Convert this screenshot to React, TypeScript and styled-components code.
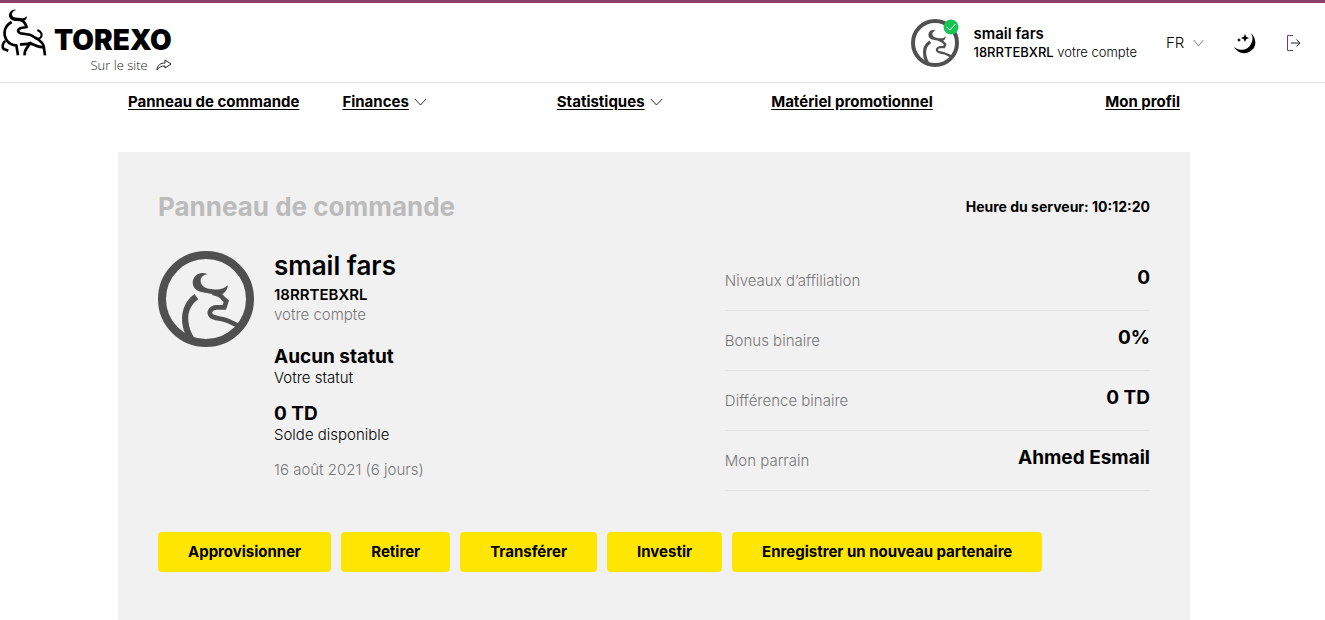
import React from "react";
import styled, { createGlobalStyle } from "styled-components";

const GlobalStyle = createGlobalStyle`
  * { box-sizing: border-box; }
  body {
    margin: 0;
    background: #fff;
    color: #000;
    font-family: Inter, "Liberation Sans", sans-serif;
    font-size: 15px;
    line-height: 20px;
  }
  a { color: inherit; }
  h1, h2, p, dl, dd, dt, ul { margin: 0; padding: 0; }
`;

const Page = styled.div`
  min-height: 100vh;
  display: flex;
  flex-direction: column;
  border-top: 3px solid #8b4065;
`;

const Header = styled.header`
  display: flex;
  justify-content: space-between;
  height: 80px;
  border-bottom: 1px solid #dedede;
`;

const Brand = styled.div`
  display: flex;
  align-items: flex-start;
  gap: 6px;
  padding-top: 6px;
`;

const BrandText = styled.div`
  display: flex;
  flex-direction: column;
  align-items: flex-end;
  padding-top: 14px;
`;

const BrandName = styled.a`
  font-size: 28px;
  line-height: 34px;
  font-weight: 900;
  text-decoration: none;
`;

const SiteLink = styled.a`
  display: flex;
  align-items: center;
  gap: 8px;
  font-family: "Open Sans", "Liberation Sans", sans-serif;
  font-size: 13px;
  line-height: 16px;
  font-weight: 300;
  color: #222;
  text-decoration: none;
`;

const Tools = styled.div`
  display: flex;
  align-items: center;
  padding-right: 24px;
`;

const Account = styled.div`
  display: flex;
  align-items: center;
  gap: 15px;
  margin-right: 29px;
`;

const AvatarWrap = styled.div`
  position: relative;
  display: flex;
`;

const Badge = styled.svg`
  position: absolute;
  top: 0;
  right: 0;
`;

const AccountName = styled.p`
  font-size: 15px;
  line-height: 18px;
  font-weight: 600;
`;

const AccountCode = styled.p`
  font-size: 13px;
  line-height: 18px;
  font-weight: 300;
  strong { font-weight: 500; }
`;

const LanguageBox = styled.label`
  display: flex;
  align-items: center;
  gap: 8px;
  margin-right: 30px;
`;

const LanguageSelect = styled.select`
  appearance: none;
  border: 0;
  padding: 0;
  width: 19px;
  background: transparent;
  font: 300 15px/20px Inter, "Liberation Sans", sans-serif;
  color: #000;
`;

const ThemeButton = styled.button`
  display: flex;
  border: 0;
  padding: 0;
  margin-right: 30px;
  background: transparent;
`;

const LogoutLink = styled.a`
  display: flex;
`;

const Container = styled.div`
  width: calc(100% - 17px);
  padding: 0 118px;
  flex: 1;
  display: flex;
  flex-direction: column;
`;

const Nav = styled.nav`
  display: grid;
  grid-template-columns: repeat(5, 1fr);
  padding: 9px 0 40px;
`;

const NavItem = styled.div<{ $end?: boolean }>`
  display: flex;
  align-items: center;
  justify-content: ${(p) => (p.$end ? "flex-end" : "flex-start")};
  gap: 5px;
  padding: 0 10px;
  white-space: nowrap;
`;

const NavLink = styled.a`
  font-weight: 700;
  text-underline-offset: 2px;
`;

const Panel = styled.main`
  flex: 1;
  padding: 40px 40px 48px;
  background: #f1f1f1;
`;

const PanelHead = styled.div`
  display: flex;
  justify-content: space-between;
  align-items: center;
  margin-bottom: 30px;
`;

const Title = styled.h1`
  font-size: 26px;
  line-height: 29px;
  font-weight: 700;
  color: #bbb;
`;

const ServerTime = styled.p`
  font-size: 14px;
  font-weight: 700;
`;

const Overview = styled.div`
  display: grid;
  grid-template-columns: 4fr 3fr;
  margin-bottom: 41px;
`;

const Profile = styled.section`
  display: flex;
  align-items: flex-start;
  gap: 20px;
`;

const UserName = styled.h2`
  font-size: 26px;
  line-height: 30px;
  font-weight: 600;
  margin-bottom: 4px;
`;

const Strong = styled.p<{ $large?: boolean }>`
  font-size: ${(p) => (p.$large ? 19 : 15)}px;
  line-height: ${(p) => (p.$large ? 22 : 20)}px;
  font-weight: ${(p) => (p.$large ? 700 : 600)};
`;

const Light = styled.p<{ $muted?: boolean }>`
  font-weight: 300;
  color: ${(p) => (p.$muted ? "#777" : "#000")};
`;

const Group = styled.div<{ $first?: boolean }>`
  margin-bottom: ${(p) => (p.$first ? 21 : 15)}px;
`;

const Stats = styled.dl`
  display: flex;
  flex-direction: column;
`;

const StatRow = styled.div`
  display: flex;
  justify-content: space-between;
  height: 60px;
  border-bottom: 1px solid #e2e2e2;
`;

const StatLabel = styled.dt`
  padding-top: 20px;
  font-weight: 300;
  color: #777;
`;

const StatValue = styled.dd`
  padding-top: 17px;
  font-size: 19px;
  font-weight: 700;
`;

const Actions = styled.div`
  display: flex;
  flex-wrap: wrap;
  gap: 10px;
`;

const ActionButton = styled.button`
  height: 40px;
  padding: 0 30px;
  border: 0;
  border-radius: 4px;
  background: #ffe600;
  color: #000;
  font: 700 15px/20px Inter, "Liberation Sans", sans-serif;
`;

const BullLogo = () => (
  <svg width="48" height="48" viewBox="0 27 144 144" aria-hidden="true">
    <path d="M49 30C36 26 26 36 27 47C28 58 39 62 50 63C60 64 70 65 76 60C80 57 81 53 80 49C72 57 63 54 53 53C42 53 35 49 36 42C37 35 42 31 49 30Z" />
    <g fill="none" stroke="#000" strokeWidth="8" strokeLinejoin="round">
      <path d="M35 66C12 78 8 104 21 122C28 132 37 135 49 136L54 166" />
      <path d="M62 61C69 63 74 67 77 74L80 81L63 84C52 88 51 96 62 100C76 103 88 101 98 108C110 117 127 123 131 138L135 166" />
      <path d="M112 90C124 94 129 106 121 113C116 117 111 117 105 114" strokeWidth="6" />
      <path d="M16 123C7 129 6 142 11 147L25 152" />
      <path d="M60 134C72 131 82 134 91 129C82 146 72 147 74 166" />
      <path d="M90 130C101 132 108 142 131 142" />
    </g>
  </svg>
);

const BullAvatar = ({ size }: { size: number }) => (
  <svg width={size} height={size} viewBox="0 0 288 288" role="img" aria-label="Avatar">
    <circle cx="144" cy="144" r="132" fill="none" stroke="#505050" strokeWidth="24" />
    <path
      fill="#505050"
      d="M149 70C126 59 105 74 104 94C104 111 116 121 134 124C153 128 165 128 180 135C199 130 210 116 209 103C195 117 178 117 160 114C140 113 128 103 128 89C128 78 137 71 149 70Z"
    />
    <g fill="none" stroke="#505050">
      <path strokeWidth="14" d="M164 125C181 129 192 135 196 143L205 151L199 169H174C158 171 151 184 159 194C167 203 186 201 203 207C219 212 233 222 249 228" />
      <path strokeWidth="19" d="M115 137C87 157 76 190 84 226C88 245 96 259 107 275" />
    </g>
  </svg>
);

const Chevron = ({ width, color = "#222" }: { width: number; color?: string }) => (
  <svg width={width} height="8" viewBox="0 0 14 8" preserveAspectRatio="none" fill="none" stroke={color} aria-hidden="true">
    <path d="M1 1L7 7L13 1" />
  </svg>
);

const stats = [
  ["Niveaux d’affiliation", "0"],
  ["Bonus binaire", "0%"],
  ["Différence binaire", "0 TD"],
  ["Mon parrain", "Ahmed Esmail"],
];

const actions = ["Approvisionner", "Retirer", "Transférer", "Investir", "Enregistrer un nouveau partenaire"];

export default function App() {
  return (
    <Page>
      <GlobalStyle />
      <Header>
        <Brand>
          <BullLogo />
          <BrandText>
            <BrandName href="#">TOREXO</BrandName>
            <SiteLink href="#">
              Sur le site
              <svg width="16" height="12" viewBox="0 0 16 12" fill="none" stroke="#222" aria-hidden="true">
                <path d="M9 1L15 5L9 9V7C5 7 3 8 1 11C1 6 5 4 9 4Z" />
              </svg>
            </SiteLink>
          </BrandText>
        </Brand>
        <Tools>
          <Account>
            <AvatarWrap>
              <BullAvatar size={48} />
              <Badge width="16" height="16" viewBox="0 0 16 16" aria-hidden="true">
                <circle cx="8" cy="8" r="7.5" fill="#15c653" />
                <path d="M3.5 8L7 11L12.5 5" fill="none" stroke="#fff" />
              </Badge>
            </AvatarWrap>
            <div>
              <AccountName>smail fars</AccountName>
              <AccountCode>
                <strong>18RRTEBXRL</strong> votre compte
              </AccountCode>
            </div>
          </Account>
          <LanguageBox>
            <LanguageSelect aria-label="Langue" defaultValue="FR">
              <option>FR</option>
            </LanguageSelect>
            <Chevron width={11} color="#777" />
          </LanguageBox>
          <ThemeButton type="button" aria-label="Mode sombre">
            <svg width="22" height="22" viewBox="0 0 22 22" aria-hidden="true">
              <path d="M17 1C24 8 22 17 15 20C9 23 3 20 0 15C7 20 14 18 17 12C19 8 19 5 17 1Z" />
              <path d="M11 2L12.2 4.8L15 6L12.2 7.2L11 10L9.8 7.2L7 6L9.8 4.8Z" />
              <path d="M5 6L5.7 7.3L7 8L5.7 8.7L5 10L4.3 8.7L3 8L4.3 7.3Z" />
            </svg>
          </ThemeButton>
          <LogoutLink href="#" aria-label="Déconnexion">
            <svg width="15" height="18" viewBox="0 0 15 18" fill="none" aria-hidden="true">
              <path d="M7 1.5H1.5V16.5H7" stroke="#6b4560" />
              <path d="M5 9H14M10.5 5.5L14 9L10.5 12.5" stroke="#222" />
            </svg>
          </LogoutLink>
        </Tools>
      </Header>
      <Container>
        <Nav>
          <NavItem><NavLink href="#">Panneau de commande</NavLink></NavItem>
          <NavItem><NavLink href="#">Finances</NavLink><Chevron width={13} /></NavItem>
          <NavItem><NavLink href="#">Statistiques</NavLink><Chevron width={13} /></NavItem>
          <NavItem><NavLink href="#">Matériel promotionnel</NavLink></NavItem>
          <NavItem $end><NavLink href="#">Mon profil</NavLink></NavItem>
        </Nav>
        <Panel>
          <PanelHead>
            <Title>Panneau de commande</Title>
            <ServerTime>Heure du serveur: 10:12:20</ServerTime>
          </PanelHead>
          <Overview>
            <Profile>
              <BullAvatar size={96} />
              <div>
                <UserName>smail fars</UserName>
                <Group $first>
                  <Strong>18RRTEBXRL</Strong>
                  <Light $muted>votre compte</Light>
                </Group>
                <Group>
                  <Strong $large>Aucun statut</Strong>
                  <Light>Votre statut</Light>
                </Group>
                <Group>
                  <Strong $large>0 TD</Strong>
                  <Light>Solde disponible</Light>
                </Group>
                <Light $muted>16 août 2021 (6 jours)</Light>
              </div>
            </Profile>
            <Stats>
              {stats.map(([label, value]) => (
                <StatRow key={label}>
                  <StatLabel>{label}</StatLabel>
                  <StatValue>{value}</StatValue>
                </StatRow>
              ))}
            </Stats>
          </Overview>
          <Actions>
            {actions.map((label) => (
              <ActionButton key={label} type="button">{label}</ActionButton>
            ))}
          </Actions>
        </Panel>
      </Container>
    </Page>
  );
}
